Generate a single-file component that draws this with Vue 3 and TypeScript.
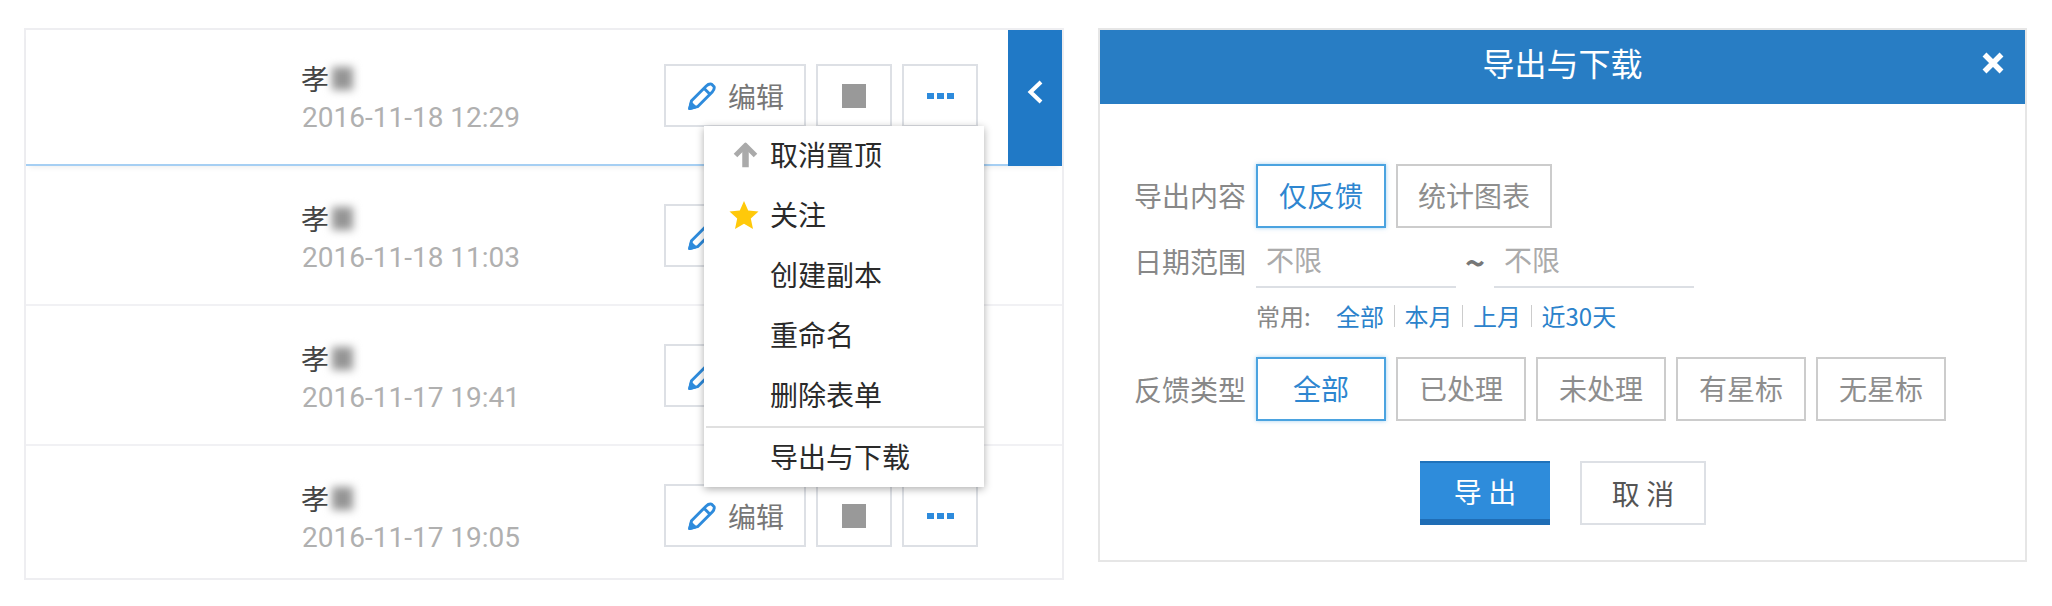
<script setup lang="ts">
const rows = [
  { date: '2016-11-18 12:29', cls: 'first', hidden: false },
  { date: '2016-11-18 11:03', cls: '', hidden: true },
  { date: '2016-11-17 19:41', cls: '', hidden: true },
  { date: '2016-11-17 19:05', cls: 'last', hidden: false },
]
const types = ['全部', '已处理', '未处理', '有星标', '无星标']
</script>

<template>
  <div class="page">
    <section class="list">
      <div v-for="(r, i) in rows" :key="r.date" class="row" :class="r.cls">
        <div class="info">
          <div class="name">孝<span class="blur"></span></div>
          <div class="date">{{ r.date }}</div>
        </div>
        <div class="actions">
          <button class="act edit">
            <svg class="pencil" width="28" height="28" viewBox="0 0 27 27" fill="none" stroke="#2e8bdc" stroke-width="2.8" stroke-linejoin="round">
              <path d="M1.6 25.6 L3.4 18 L17.6 3.8 Q20 1.4 22.6 2 L25.2 4.6 Q25.8 7.2 23.4 9.6 L9.2 23.8 Z" />
              <path d="M15.4 6 L21.2 11.8" />
              <path d="M1.6 25.6 L3 20.4 L6.8 24.2 Z" fill="#2e8bdc" />
            </svg>
            <span v-if="!r.hidden">编辑</span>
            <span v-else class="ghost"></span>
          </button>
          <button class="act icon"><span class="stop"></span></button>
          <button class="act icon dots"><i></i><i></i><i></i></button>
        </div>
        <template v-if="i === 0">
          <div class="tab">
            <svg width="18" height="24" viewBox="0 0 18 24" fill="none" stroke="#fff" stroke-width="4"><path d="M15 2 L4.5 12 L15 22" /></svg>
          </div>
          <ul class="menu">
            <li>
              <svg class="mi" width="25" height="25" viewBox="0 0 25 25" fill="none" stroke="#aaa"><path d="M2.5 13 L12.5 3 L22.5 13" stroke-width="5" /><path d="M12.5 5 V25" stroke-width="6.5" /></svg>
              取消置顶
            </li>
            <li>
              <svg class="mi" width="30" height="28" viewBox="0 0 30 28" fill="#ffc90a"><path d="M15 0 L19.2 9.6 L29.5 10.6 L21.8 17.6 L24 28 L15 22.7 L6 28 L8.2 17.6 L0.5 10.6 L10.8 9.6 Z" /></svg>
              关注
            </li>
            <li>创建副本</li>
            <li>重命名</li>
            <li>删除表单</li>
            <li class="sep">导出与下载</li>
          </ul>
        </template>
      </div>
    </section>

    <section class="dialog">
      <header class="head">
        <h2>导出与下载</h2>
        <svg class="close" width="22" height="22" viewBox="0 0 22 22" stroke="#fff" stroke-width="5.5"><path d="M2.5 2.5 L19.5 19.5 M19.5 2.5 L2.5 19.5" /></svg>
      </header>
      <div class="body">
        <div class="field f1">
          <label>导出内容</label>
          <div class="opts">
            <span class="opt on w130">仅反馈</span>
            <span class="opt w156">统计图表</span>
          </div>
        </div>
        <div class="field f2">
          <label>日期范围</label>
          <div class="dates">
            <span class="inp">不限</span>
            <span class="tilde">~</span>
            <span class="inp">不限</span>
          </div>
        </div>
        <div class="common">
          <span class="cl">常用:</span>
          <a>全部</a><i></i><a>本月</a><i></i><a>上月</a><i></i><a>近30天</a>
        </div>
        <div class="field f3">
          <label>反馈类型</label>
          <div class="opts">
            <span v-for="(t, i) in types" :key="t" class="opt w130" :class="{ on: i === 0 }">{{ t }}</span>
          </div>
        </div>
        <div class="foot">
          <button class="primary">导 出</button>
          <button class="cancel">取 消</button>
        </div>
      </div>
    </section>
  </div>
</template>

<style>
html, body { background: #fff; }
</style>

<style scoped>
.page {
  display: flex;
  align-items: flex-start;
  gap: 34px;
  padding: 28px 0 0 24px;
  font-family: "Noto Sans CJK SC", sans-serif;
  font-size: 28px;
  width: 2052px;
  height: 606px;
  box-sizing: border-box;
  overflow: hidden;
}
.list {
  width: 1040px;
  height: 552px;
  box-sizing: border-box;
  border: 2px solid #eeeef1;
  flex: none;
}
.row {
  position: relative;
  display: flex;
  height: 140px;
  box-sizing: border-box;
  padding: 38px 0 0 276px;
  border-bottom: 2px solid #f1f1f4;
}
.row.first {
  height: 136px;
  padding-top: 34px;
  border-bottom-color: #a6cff3;
  box-shadow: 0 4px 6px -3px rgba(0, 0, 0, 0.08);
}
.row.last { height: 132px; border-bottom: 0; }
.info { width: 362px; margin-top: -4px; flex: none; }
.name {
  display: flex;
  align-items: center;
  height: 37px;
  line-height: 37px;
  margin-left: -1px;
  color: #444;
}
.blur {
  display: inline-block;
  width: 21px;
  height: 23px;
  margin-left: 3px;
  background: #959595;
  filter: blur(4px);
}
.date {
  height: 37px;
  line-height: 37px;
  margin-top: 2px;
  font-family: Roboto, sans-serif;
  color: #b0b0b0;
}
.actions { display: flex; gap: 10px; }
.act {
  height: 63px;
  box-sizing: border-box;
  border: 2px solid #dde0e5;
  background: #fff;
  padding: 0;
  display: flex;
  align-items: center;
  justify-content: center;
  font: inherit;
  color: #777;
}
.edit { width: 142px; gap: 12px; padding-left: 2px; }
.ghost { width: 56px; height: 28px; }
.icon { width: 76px; }
.pencil { flex: none; }
.stop { width: 24px; height: 24px; background: #999; }
.dots { gap: 3px; }
.dots i { width: 7px; height: 6px; background: #2e8bdc; margin-top: 1px; }
.tab {
  position: absolute;
  right: 0;
  top: 0;
  bottom: -2px;
  width: 54px;
  background: #2079c6;
  display: flex;
  align-items: center;
  justify-content: center;
  padding-bottom: 12px;
  box-sizing: border-box;
}
.menu {
  position: absolute;
  left: 678px;
  top: 96px;
  width: 280px;
  margin: 0;
  padding: 0;
  list-style: none;
  background: #fff;
  box-shadow: 0 2px 8px rgba(0, 0, 0, 0.32);
  z-index: 2;
  color: #2a2a2a;
}
.menu li {
  position: relative;
  box-sizing: border-box;
  height: 60px;
  line-height: 57px;
  padding-left: 66px;
}
.menu .sep {
  border-top: 2px solid #e0e0e0;
  margin-left: 2px;
  padding-left: 64px;
  height: 61px;
  line-height: 56px;
}
.mi { position: absolute; top: calc(50% - 1px); transform: translateY(-50%); }
.menu li:nth-child(1) .mi { left: 29px; }
.menu li:nth-child(2) .mi { left: 25px; }

.dialog {
  width: 929px;
  height: 534px;
  box-sizing: border-box;
  border: 2px solid #e6e6e6;
  flex: none;
}
.head {
  position: relative;
  height: 74px;
  box-sizing: border-box;
  padding-bottom: 10px;
  background: #287dc4;
  display: flex;
  align-items: center;
  justify-content: center;
}
.head h2 { margin: 0; font-size: 32px; font-weight: 400; color: #fff; }
.close { position: absolute; right: 21px; top: 22px; }
.body { padding-left: 34px; color: #888; }
.field { display: flex; align-items: center; }
.field label { width: 122px; flex: none; }
.f1 { margin-top: 60px; }
.f1 label { margin-top: -2px; }
.f2 { margin-top: 16px; }
.f2 label { align-self: flex-start; line-height: 34px; }
.f3 { margin-top: 23px; }
.opts { display: flex; gap: 10px; }
.opt {
  height: 64px;
  line-height: 58px;
  box-sizing: border-box;
  border: 2px solid #ccc;
  text-align: center;
  color: #8e8e8e;
}
.opt.on { border-color: #4ba3e0; color: #2e86d0; box-shadow: 0 0 4px rgba(75, 163, 224, 0.5); }
.w130 { width: 130px; }
.w156 { width: 156px; }
.dates { display: flex; align-items: flex-start; }
.inp {
  width: 200px;
  height: 44px;
  line-height: 30px;
  box-sizing: border-box;
  padding-left: 10px;
  border-bottom: 2px solid #dcdfe4;
  color: #ababab;
}
.tilde { width: 38px; text-align: center; color: #777; line-height: 36px; font-size: 34px; font-weight: 700; }
.common {
  display: flex;
  align-items: center;
  margin: 10px 0 0 122px;
  font-size: 24px;
  height: 36px;
  line-height: 36px;
}
.cl { width: 80px; color: #888; }
.common a { color: #2b82cb; }
.common i { width: 1px; height: 22px; background: #ccc; margin: 0 10px 0 9.5px; }
.foot { display: flex; gap: 30px; margin: 40px 0 0 286px; }
.foot button {
  height: 64px;
  box-sizing: border-box;
  font: inherit;
  padding: 0;
}
.primary {
  width: 130px;
  border: 0;
  border-top: 2px solid #1f72ba;
  border-bottom: 6px solid #1f6db5;
  background: #2e8cdb;
  color: #fff;
}
.cancel {
  width: 126px;
  border: 2px solid #dde0e5;
  background: #fff;
  color: #555;
}
</style>
